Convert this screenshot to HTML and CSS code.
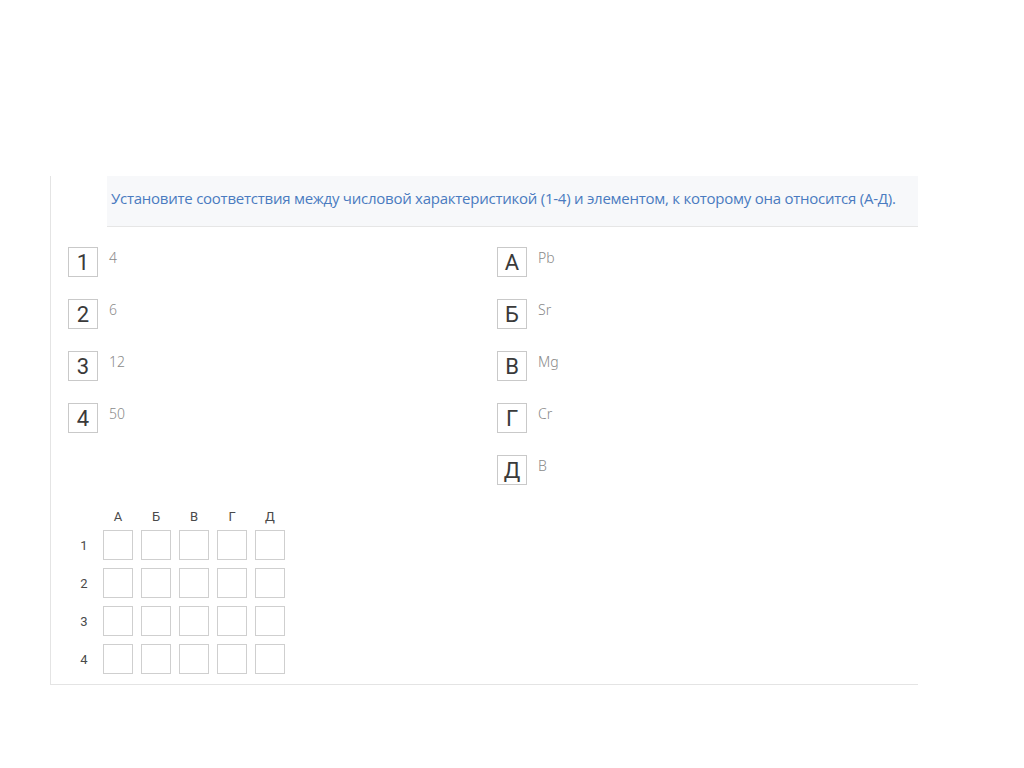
FILE: index.html
```html
<!DOCTYPE html>
<html lang="ru">
<head>
<meta charset="utf-8">
<title>Задание</title>
<link rel="stylesheet" href="styles.css">
</head>
<body>
<div class="task">
  <div class="task-head">
    <span class="task-title">Установите соответствия между числовой характеристикой (1-4) и элементом, к которому она относится (А-Д).</span>
  </div>
  <div class="task-body">
    <div class="columns">
      <ul class="col">
        <li class="item"><span class="key">1</span><span class="val">4</span></li>
        <li class="item"><span class="key">2</span><span class="val">6</span></li>
        <li class="item"><span class="key">3</span><span class="val">12</span></li>
        <li class="item"><span class="key">4</span><span class="val">50</span></li>
      </ul>
      <ul class="col">
        <li class="item"><span class="key">А</span><span class="val">Pb</span></li>
        <li class="item"><span class="key">Б</span><span class="val">Sr</span></li>
        <li class="item"><span class="key">В</span><span class="val">Mg</span></li>
        <li class="item"><span class="key">Г</span><span class="val">Cr</span></li>
        <li class="item"><span class="key">Д</span><span class="val">B</span></li>
      </ul>
    </div>
    <div class="answer">
      <span></span><span class="hd">А</span><span class="hd">Б</span><span class="hd">В</span><span class="hd">Г</span><span class="hd">Д</span>
      <span class="rl">1</span><span class="cell"></span><span class="cell"></span><span class="cell"></span><span class="cell"></span><span class="cell"></span>
      <span class="rl">2</span><span class="cell"></span><span class="cell"></span><span class="cell"></span><span class="cell"></span><span class="cell"></span>
      <span class="rl">3</span><span class="cell"></span><span class="cell"></span><span class="cell"></span><span class="cell"></span><span class="cell"></span>
      <span class="rl">4</span><span class="cell"></span><span class="cell"></span><span class="cell"></span><span class="cell"></span><span class="cell"></span>
    </div>
  </div>
</div>
</body>
</html>
```

FILE: styles.css
```css
html, body {
  margin: 0;
  padding: 0;
  background: #fff;
}
body {
  font-family: "Open Sans", "Noto Sans", sans-serif;
}
.task {
  margin: 176px 0 0 50px;
  width: 867px;
  border-left: 1px solid #e4e4e4;
  border-bottom: 1px solid #e4e4e4;
}
.task-head {
  margin-left: 56px;
  height: 50px;
  background: #f7f8fa;
  border-bottom: 1px solid #e6e6e6;
  display: flex;
  align-items: center;
  padding-left: 4px;
}
.task-title {
  color: #4a7bc0;
  font-size: 15px;
  font-weight: 500;
  letter-spacing: -0.25px;
  position: relative;
  top: -3px;
}
.task-body {
  padding: 20px 0 10px 17px;
}
.columns {
  display: grid;
  grid-template-columns: 429px 1fr;
}
.col {
  list-style: none;
  margin: 0;
  padding: 0;
  display: flex;
  flex-direction: column;
  gap: 22px;
}
.item {
  display: flex;
  align-items: flex-start;
  gap: 11px;
}
.key {
  width: 28px;
  height: 28px;
  border: 1px solid #c9c9c9;
  display: flex;
  align-items: center;
  justify-content: center;
  font-family: "Roboto", "Noto Sans", sans-serif;
  font-size: 22px;
  font-weight: 400;
  color: #3a3a3a;
  flex: none;
}
.val {
  font-size: 14px;
  line-height: 20px;
  padding-top: 1px;
  color: #8a8a8a;
  font-family: "Noto Sans", sans-serif;
  font-weight: 300;
}
.answer {
  display: grid;
  grid-template-columns: 22px repeat(5, 30px);
  grid-auto-rows: 30px;
  grid-template-rows: 14px;
  column-gap: 8px;
  row-gap: 8px;
  margin: 23px 0 0 5px;
}
.hd, .rl {
  font-family: "Roboto", "Noto Sans", sans-serif;
  font-size: 13px;
  color: #4a4a4a;
  display: flex;
  align-items: center;
  justify-content: center;
}
.hd {
  align-items: flex-start;
  line-height: 18px;
}
.cell {
  box-sizing: border-box;
  border: 1px solid #cfcfcf;
  width: 30px;
  height: 30px;
}
```
